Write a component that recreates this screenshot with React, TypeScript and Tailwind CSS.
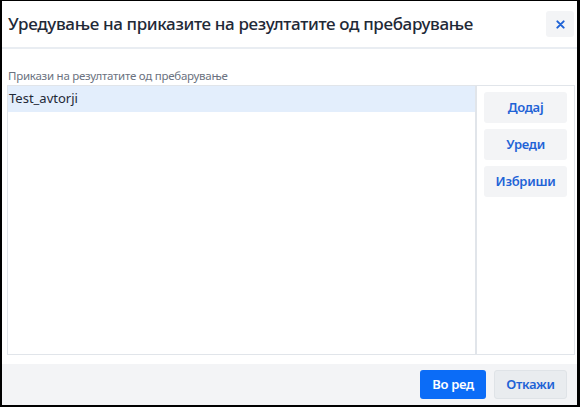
import React from "react";

export default function App() {
  const font = { fontFamily: '"Noto Sans", "Open Sans", sans-serif' };
  return (
    <div
      className="w-[580px] h-[407px] bg-white border-black border-l-2 border-t border-r-[3px] border-b-2 flex flex-col overflow-hidden"
      style={font}
    >
      <div className="h-[48px] shrink-0 flex items-center justify-between pl-[6px] pr-[3px] border-b-2 border-[#e9edf2]">
        <div className="text-[17px] font-medium text-[#1f2937] tracking-[-0.35px]">
          Уредување на приказите на резултатите од пребарување
        </div>
        <button className="w-[28px] h-[26px] rounded-[3px] bg-[#f3f4f6] flex items-center justify-center">
          <svg width="9" height="9" viewBox="0 0 10 10">
            <path d="M1.5 1.5 L8.5 8.5 M8.5 1.5 L1.5 8.5" stroke="#1f63d6" strokeWidth="2.2" strokeLinecap="round" />
          </svg>
        </button>
      </div>
      <div className="flex-1 flex flex-col pl-[5px] pr-[2px] pt-[18px] pb-[9px]">
        <div className="text-[11.5px] leading-[17px] text-[#6b7280] pl-[1px] mb-[1px] tracking-[-0.25px]">
          Прикази на резултатите од пребарување
        </div>
        <div className="flex-1 flex border border-[#e1e5ea]">
          <div className="flex-1 border-r-2 border-[#e1e5ea]">
            <div className="h-[26px] bg-[#e3eefc] flex items-center text-[13px] text-[#1f2937] pl-[1px]">
              Test_avtorji
            </div>
          </div>
          <div className="w-[97px] flex flex-col gap-[6px] px-[7px] pt-[6px]">
            <button className="h-[31px] rounded-[3px] bg-[#f3f4f6] text-[13px] font-semibold text-[#1f63d6] tracking-[-0.3px]">
              Додај
            </button>
            <button className="h-[31px] rounded-[3px] bg-[#f3f4f6] text-[13px] font-semibold text-[#1f63d6] tracking-[-0.3px]">
              Уреди
            </button>
            <button className="h-[31px] rounded-[3px] bg-[#f3f4f6] text-[13px] font-semibold text-[#1f63d6] tracking-[-0.3px]">
              Избриши
            </button>
          </div>
        </div>
      </div>
      <div className="h-[41px] shrink-0 bg-[#f3f4f6] flex items-center justify-end gap-[8px] pr-[10px]">
        <button className="w-[66px] h-[29px] rounded-[3px] bg-[#0b6cf7] text-white text-[13px] font-semibold tracking-[-0.3px]">
          Во ред
        </button>
        <button className="w-[73px] h-[29px] rounded-[3px] bg-[#e9ecef] border border-[#dfe3e7] text-[#1f63d6] text-[13px] font-semibold tracking-[-0.3px]">
          Откажи
        </button>
      </div>
    </div>
  );
}
